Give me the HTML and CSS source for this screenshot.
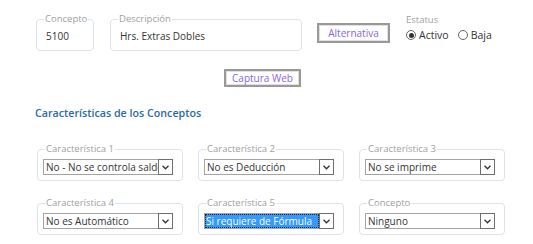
FILE: index.html
```html
<!DOCTYPE html>
<html lang="es">
  <head>
    <meta charset="UTF-8" />
    <title>Conceptos</title>
    <link rel="stylesheet" href="styles.css">
  </head>
  <body>
    <div class="page">
      <div class="top-row">
        <fieldset class="box box-concepto">
          <legend>Concepto</legend>
          <div class="value">5100</div>
        </fieldset>
        <fieldset class="box box-descripcion">
          <legend>Descripción</legend>
          <div class="value">Hrs. Extras Dobles</div>
        </fieldset>
        <button class="btn btn-alternativa">Alternativa</button>
        <div class="estatus">
          <div class="estatus-label">Estatus</div>
          <div class="radios">
            <label class="radio"><span class="dot checked"></span>Activo</label>
            <label class="radio"><span class="dot"></span>Baja</label>
          </div>
        </div>
      </div>

      <div class="web-row">
        <button class="btn btn-web">Captura Web</button>
      </div>

      <h2 class="section-title">Características de los Conceptos</h2>

      <div class="grid">
        <fieldset class="box field">
          <legend>Característica 1</legend>
          <div class="select">
            <span class="select-text">No - No se controla saldo</span>
            <span class="arrow"><svg width="7" height="5" viewBox="0 0 7 5"><path d="M0.5 0.8 L3.5 3.8 L6.5 0.8" fill="none" stroke="#333" stroke-width="1.3"/></svg></span>
          </div>
        </fieldset>
        <fieldset class="box field">
          <legend>Característica 2</legend>
          <div class="select">
            <span class="select-text">No es Deducción</span>
            <span class="arrow"><svg width="7" height="5" viewBox="0 0 7 5"><path d="M0.5 0.8 L3.5 3.8 L6.5 0.8" fill="none" stroke="#333" stroke-width="1.3"/></svg></span>
          </div>
        </fieldset>
        <fieldset class="box field">
          <legend>Característica 3</legend>
          <div class="select">
            <span class="select-text">No se imprime</span>
            <span class="arrow"><svg width="7" height="5" viewBox="0 0 7 5"><path d="M0.5 0.8 L3.5 3.8 L6.5 0.8" fill="none" stroke="#333" stroke-width="1.3"/></svg></span>
          </div>
        </fieldset>
        <fieldset class="box field">
          <legend>Característica 4</legend>
          <div class="select">
            <span class="select-text">No es Automático</span>
            <span class="arrow"><svg width="7" height="5" viewBox="0 0 7 5"><path d="M0.5 0.8 L3.5 3.8 L6.5 0.8" fill="none" stroke="#333" stroke-width="1.3"/></svg></span>
          </div>
        </fieldset>
        <fieldset class="box field">
          <legend>Característica 5</legend>
          <div class="select focused">
            <span class="select-text"><span class="highlight">Si requiere de Fórmula</span></span>
            <span class="arrow"><svg width="7" height="5" viewBox="0 0 7 5"><path d="M0.5 0.8 L3.5 3.8 L6.5 0.8" fill="none" stroke="#333" stroke-width="1.3"/></svg></span>
          </div>
        </fieldset>
        <fieldset class="box field">
          <legend>Concepto</legend>
          <div class="select">
            <span class="select-text">Ninguno</span>
            <span class="arrow"><svg width="7" height="5" viewBox="0 0 7 5"><path d="M0.5 0.8 L3.5 3.8 L6.5 0.8" fill="none" stroke="#333" stroke-width="1.3"/></svg></span>
          </div>
        </fieldset>
      </div>
    </div>
  </body>
</html>
```

FILE: styles.css
```css
body {
  margin: 0;
  padding: 0;
  background: #fff;
  font-family: "Open Sans", "DejaVu Sans", sans-serif;
  font-size: 10px;
  color: #333;
}

.page {
  padding: 13px 0 0 36px;
}

.top-row {
  display: flex;
  align-items: flex-start;
}

/* cajas con leyenda */
.box {
  margin: 0;
  border: 1px solid #dde3ea;
  border-radius: 4px;
  min-width: 0;
}
.box legend {
  padding: 0 1px;
  margin-left: 0;
  line-height: 12px;
  font-size: 9.5px;
  color: #a0a0a0;
}

.box-concepto {
  width: 58px;
  box-sizing: border-box;
  padding: 0 7px;
}
.box-descripcion {
  width: 192px;
  box-sizing: border-box;
  padding: 0 7px;
  margin-left: 16px;
}
.value {
  line-height: 14px;
  padding: 4px 2px 7px;
}

.btn {
  font-family: inherit;
  font-size: 10px;
  color: #8a63e6;
  background: #fff;
  border: 2px solid #999;
  box-shadow: inset 0 0 0 1px #e0e0e0;
  padding: 0;
  cursor: pointer;
}
.btn-alternativa {
  width: 73px;
  height: 20px;
  margin: 10px 0 0 15px;
}

.estatus {
  margin: 1px 0 0 16px;
}
.estatus-label {
  line-height: 12px;
  font-size: 9.5px;
  color: #a0a0a0;
}
.radios {
  display: flex;
  align-items: center;
  margin-top: 2px;
  line-height: 14px;
  font-size: 10.5px;
}
.radio {
  display: flex;
  align-items: center;
  margin-right: 9px;
}
.dot {
  width: 10px;
  height: 10px;
  border: 1px solid #666;
  border-radius: 50%;
  box-sizing: border-box;
  margin-right: 3px;
  display: flex;
  align-items: center;
  justify-content: center;
}
.dot.checked::after {
  content: "";
  width: 5px;
  height: 5px;
  border-radius: 50%;
  background: #333;
}

.web-row {
  margin: 18px 0 0 188px;
}
.btn-web {
  width: 77px;
  height: 18px;
}

.section-title {
  margin: 18px 0 0 -1px;
  font-size: 10.7px;
  font-weight: 600;
  line-height: 16px;
  color: #2c6aa8;
}

.grid {
  display: grid;
  grid-template-columns: repeat(3, 146px);
  column-gap: 15px;
  row-gap: 16px;
  margin: 22px 0 0 1px;
}

.field {
  padding: 4px 9px 5px 5px;
}
.field legend {
  margin-left: 2px;
}

.select {
  display: flex;
  height: 16px;
  width: 130px;
  box-sizing: border-box;
  border: 1px solid #a3a3a3;
  background: #fff;
}
.select-text {
  flex: 1;
  overflow: hidden;
  white-space: nowrap;
  line-height: 14px;
  padding-left: 2px;
  color: #333;
}
.arrow {
  width: 15px;
  box-sizing: border-box;
  border: 1px solid #6e6e6e;
  margin: -1px -1px -1px 0;
  display: flex;
  align-items: center;
  justify-content: center;
  background: #fff;
}

.focused .select-text {
  padding: 0;
}
.highlight {
  display: block;
  height: 14px;
  background: #3399ff;
  color: #fff;
  outline: 1px dotted #222;
  outline-offset: -1px;
  padding-left: 1px;
}
```
